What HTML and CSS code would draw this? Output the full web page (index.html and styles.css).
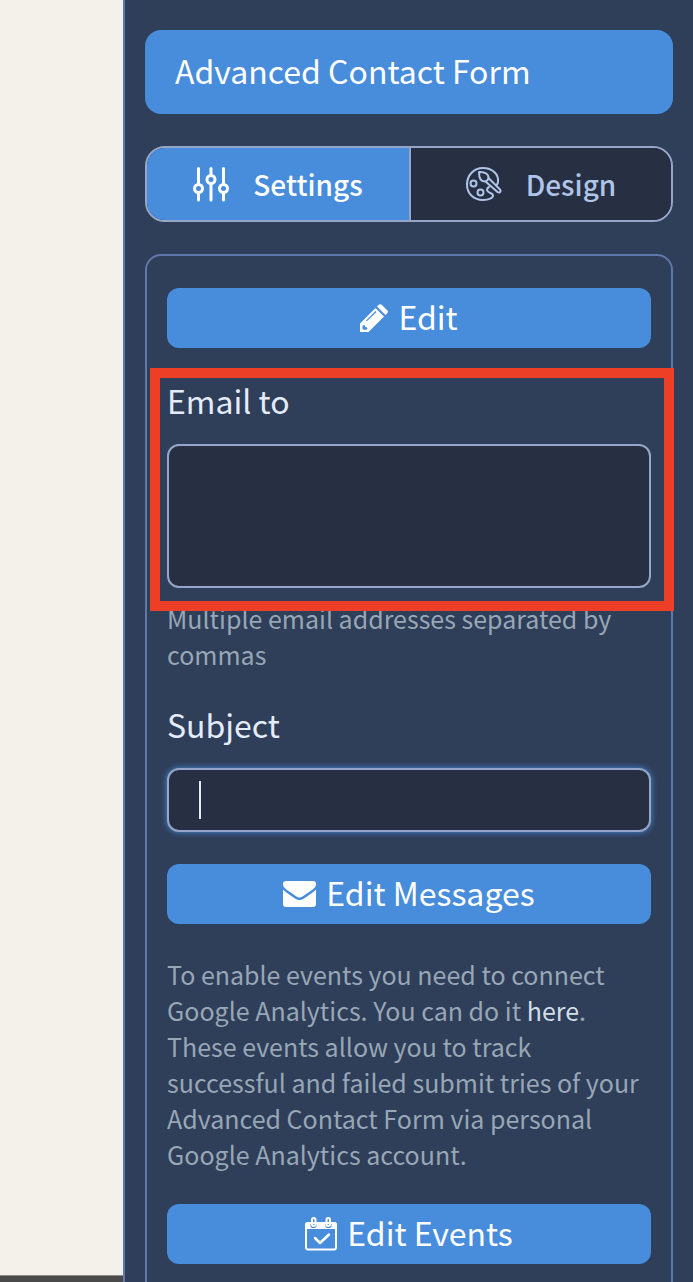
FILE: index.html
```html
<!DOCTYPE html>
<html lang="en">
<head>
    <meta charset="UTF-8">
    <meta name="viewport" content="width=device-width, initial-scale=1.0">
    <title>Advanced Contact Form</title>
    <link rel="stylesheet" href="styles.css">
</head>
<body>
    <main class="preview">
        <div class="preview-page"></div>
        <div class="preview-footer"></div>
    </main>

    <aside class="sidebar">
        <h1 class="title">Advanced Contact Form</h1>

        <div class="tabs">
            <button type="button" class="tab active">
                <svg class="tab-icon" viewBox="0 0 36 36" fill="none" stroke="currentColor" stroke-width="3" stroke-linecap="round">
                    <path d="M5.500 2.500v15M5.500 28v6M18 2.500v6M18 18.500v15.500M30.500 2.500v15M30.500 28v6"/>
                    <circle cx="5.500" cy="22.500" r="4"/>
                    <circle cx="18" cy="13.500" r="4"/>
                    <circle cx="30.500" cy="22.500" r="4"/>
                </svg>
                Settings
            </button>
            <button type="button" class="tab">
                <svg class="tab-icon" viewBox="0 0 36 36" fill="none" stroke="currentColor" stroke-width="2" stroke-linecap="round" stroke-linejoin="round">
                    <path d="M32 16C33 8 26 2 17 2 8 2 1 9 1 18.500S8 34 17 34c6 0 10-2 10-4.500 0-3-5.500-2-6-5.500 0-1.500 1-2.500 2-3M32 16c0 1-.5 2-1.500 3"/>
                    <path d="M13 6c5 0 9 1.500 9.500 5 .3 2.500-1.500 4.500-4 4.500-4 0-5.500-4.500-5.500-9.500z"/>
                    <path d="M22.500 12L34 23.500c1.500 2-.5 4-2.500 2.500L19.500 15.500"/>
                    <circle cx="7.500" cy="17.500" r="3"/>
                    <circle cx="14.500" cy="26.500" r="3"/>
                </svg>
                Design
            </button>
        </div>

        <form class="panel">
            <button type="button" class="button">
                <svg class="icon-pencil" viewBox="0 0 28 28" fill="currentColor">
                    <path fill-rule="evenodd" d="M0 28v-8.500L15.500 4 24 12.500 8.500 28zM3.500 21l-1 1v3l1 .8h3l1-1L6.500 23H5v-1.500zM15.500 7L6 16.500l.8.800L16.500 8z"/>
                    <path d="M17 2.500L18.700.8q1.500-1.300 3 0L27.200 6.300q1.500 1.500 0 3L25.500 11z"/>
                </svg>
                <span>Edit</span>
            </button>

            <div class="field highlighted">
                <label for="email-to">Email to</label>
                <textarea id="email-to" class="input textarea"></textarea>
                <p class="help">Multiple email addresses separated by commas</p>
            </div>

            <div class="field">
                <label for="subject">Subject</label>
                <div class="input-wrap">
                    <input type="text" id="subject" class="input focused">
                    <span class="caret"></span>
                </div>
            </div>

            <button type="button" class="button">
                <svg class="icon-mail" viewBox="0 0 33 26" fill="currentColor">
                    <path d="M3 0h27q3 0 3 3c0 3-2 4.500-4 6l-9.500 6.500q-3 2-6 0L4 9C2 7.500 0 6 0 3q0-3 3-3z"/>
                    <path d="M0 8.500q1 1.300 3 2.700l9 6.300q4.500 3 9 0l9-6.300q2-1.400 3-2.700V23q0 3-3 3H3q-3 0-3-3z"/>
                </svg>
                <span>Edit Messages</span>
            </button>

            <p class="note">To enable events you need to connect Google Analytics. You can do it <a href="#">here</a>. These events allow you to track successful and failed submit tries of your Advanced Contact Form via personal Google Analytics account.</p>

            <button type="button" class="button">
                <svg class="icon-calendar" viewBox="0 0 32 34" fill="none" stroke="currentColor" stroke-width="2" stroke-linecap="round" stroke-linejoin="round">
                    <path fill="currentColor" stroke="none" d="M3 5h2.500v4q0 2 3 2t3-2V5h9v4q0 2 3 2t3-2V5H29q3 0 3 3v4H0V8q0-3 3-3z"/>
                    <rect x="1" y="6" width="30" height="26.500" rx="2"/>
                    <rect x="7" y="1" width="3.500" height="8" rx="1.700"/>
                    <rect x="21.500" y="1" width="3.500" height="8" rx="1.700"/>
                    <path stroke-width="2.500" d="M10 21l5 5 9-8.500"/>
                </svg>
                <span>Edit Events</span>
            </button>
        </form>
    </aside>
</body>
</html>
```

FILE: styles.css
```css
*,
*::after {
    box-sizing: border-box;
}
body {
    margin: 0;
    display: flex;
    height: 100vh;
    overflow: hidden;
    font-family: "Noto Sans CJK SC", "Noto Sans", sans-serif;
    background-color: #2f3e59;
}
.preview {
    display: flex;
    flex-direction: column;
    flex: 0 0 123px;
}
.preview-page {
    flex: 1;
    background-color: #f4f0ea;
}
.preview-footer {
    height: 7px;
    background-color: #4a4a4a;
    border-top: 1px solid #8c8a87;
}
.sidebar {
    flex: 1;
    min-width: 0;
    padding: 30px 20px;
    border-left: 2px solid #6079ab;
    overflow-y: auto;
    scrollbar-width: none;
}
.title {
    margin: 0 0 32px;
    padding: 20px 30px 24px;
    border-radius: 16px;
    background-color: #488cdc;
    color: #fff;
    font-size: 32px;
    font-weight: 400;
    line-height: 40px;
}
.tabs {
    display: grid;
    grid-template-columns: 1fr 1fr;
    height: 76px;
    margin-bottom: 32px;
    border: 2px solid #97a5c8;
    border-radius: 20px;
    overflow: hidden;
}
.tab {
    display: flex;
    justify-content: center;
    align-items: center;
    gap: 24px;
    padding: 0;
    border: none;
    background-color: #272f43;
    color: #afc4e8;
    font-family: inherit;
    font-size: 28px;
    font-weight: 500;
}
.tab + .tab {
    border-left: 2px solid #97a5c8;
}
.tab.active {
    background-color: #488cdc;
    color: #fff;
}
.tab-icon {
    width: 36px;
    height: 36px;
}
.panel {
    display: flex;
    flex-direction: column;
    gap: 32px;
    padding: 32px 20px;
    border: 2px solid #6079ab;
    border-radius: 16px;
}
.button {
    display: flex;
    justify-content: center;
    align-items: center;
    gap: 10px;
    height: 60px;
    padding: 0;
    border: none;
    border-radius: 12px;
    background-color: #488cdc;
    color: #fff;
    font-family: inherit;
    font-size: 32px;
    line-height: 40px;
    cursor: pointer;
}
.button span {
    padding-bottom: 4px;
}
.icon-pencil {
    width: 28px;
    height: 28px;
}
.icon-mail {
    width: 33px;
    height: 26px;
}
.icon-calendar {
    width: 32px;
    height: 34px;
}
.field {
    position: relative;
}
.field label {
    display: block;
    margin-bottom: 24px;
    color: #e4ecf9;
    font-size: 32px;
    line-height: 40px;
}
.input {
    display: block;
    width: 100%;
    height: 64px;
    padding: 10px 30px;
    border: 2px solid #97a5c8;
    border-radius: 12px;
    outline: none;
    background-color: #272f43;
    color: #e4ecf9;
    font-family: inherit;
    font-size: 28px;
}
.textarea {
    height: 144px;
    resize: none;
}
.focused {
    box-shadow: 0 0 6px #488cdc;
}
.input-wrap {
    position: relative;
}
.caret {
    position: absolute;
    top: 13px;
    left: 32px;
    width: 2px;
    height: 38px;
    background-color: #e4ecf9;
}
.highlighted::after {
    content: "";
    position: absolute;
    top: -12px;
    left: -17px;
    right: -23px;
    height: 243px;
    border: 10px solid #ec3f25;
    pointer-events: none;
}
.help,
.note {
    margin: 0;
    color: #97a7b5;
    font-size: 25px;
    line-height: 36px;
}
.help {
    margin-top: 12px;
}
.note a {
    color: #d3dfe8;
    text-decoration: none;
}
```
